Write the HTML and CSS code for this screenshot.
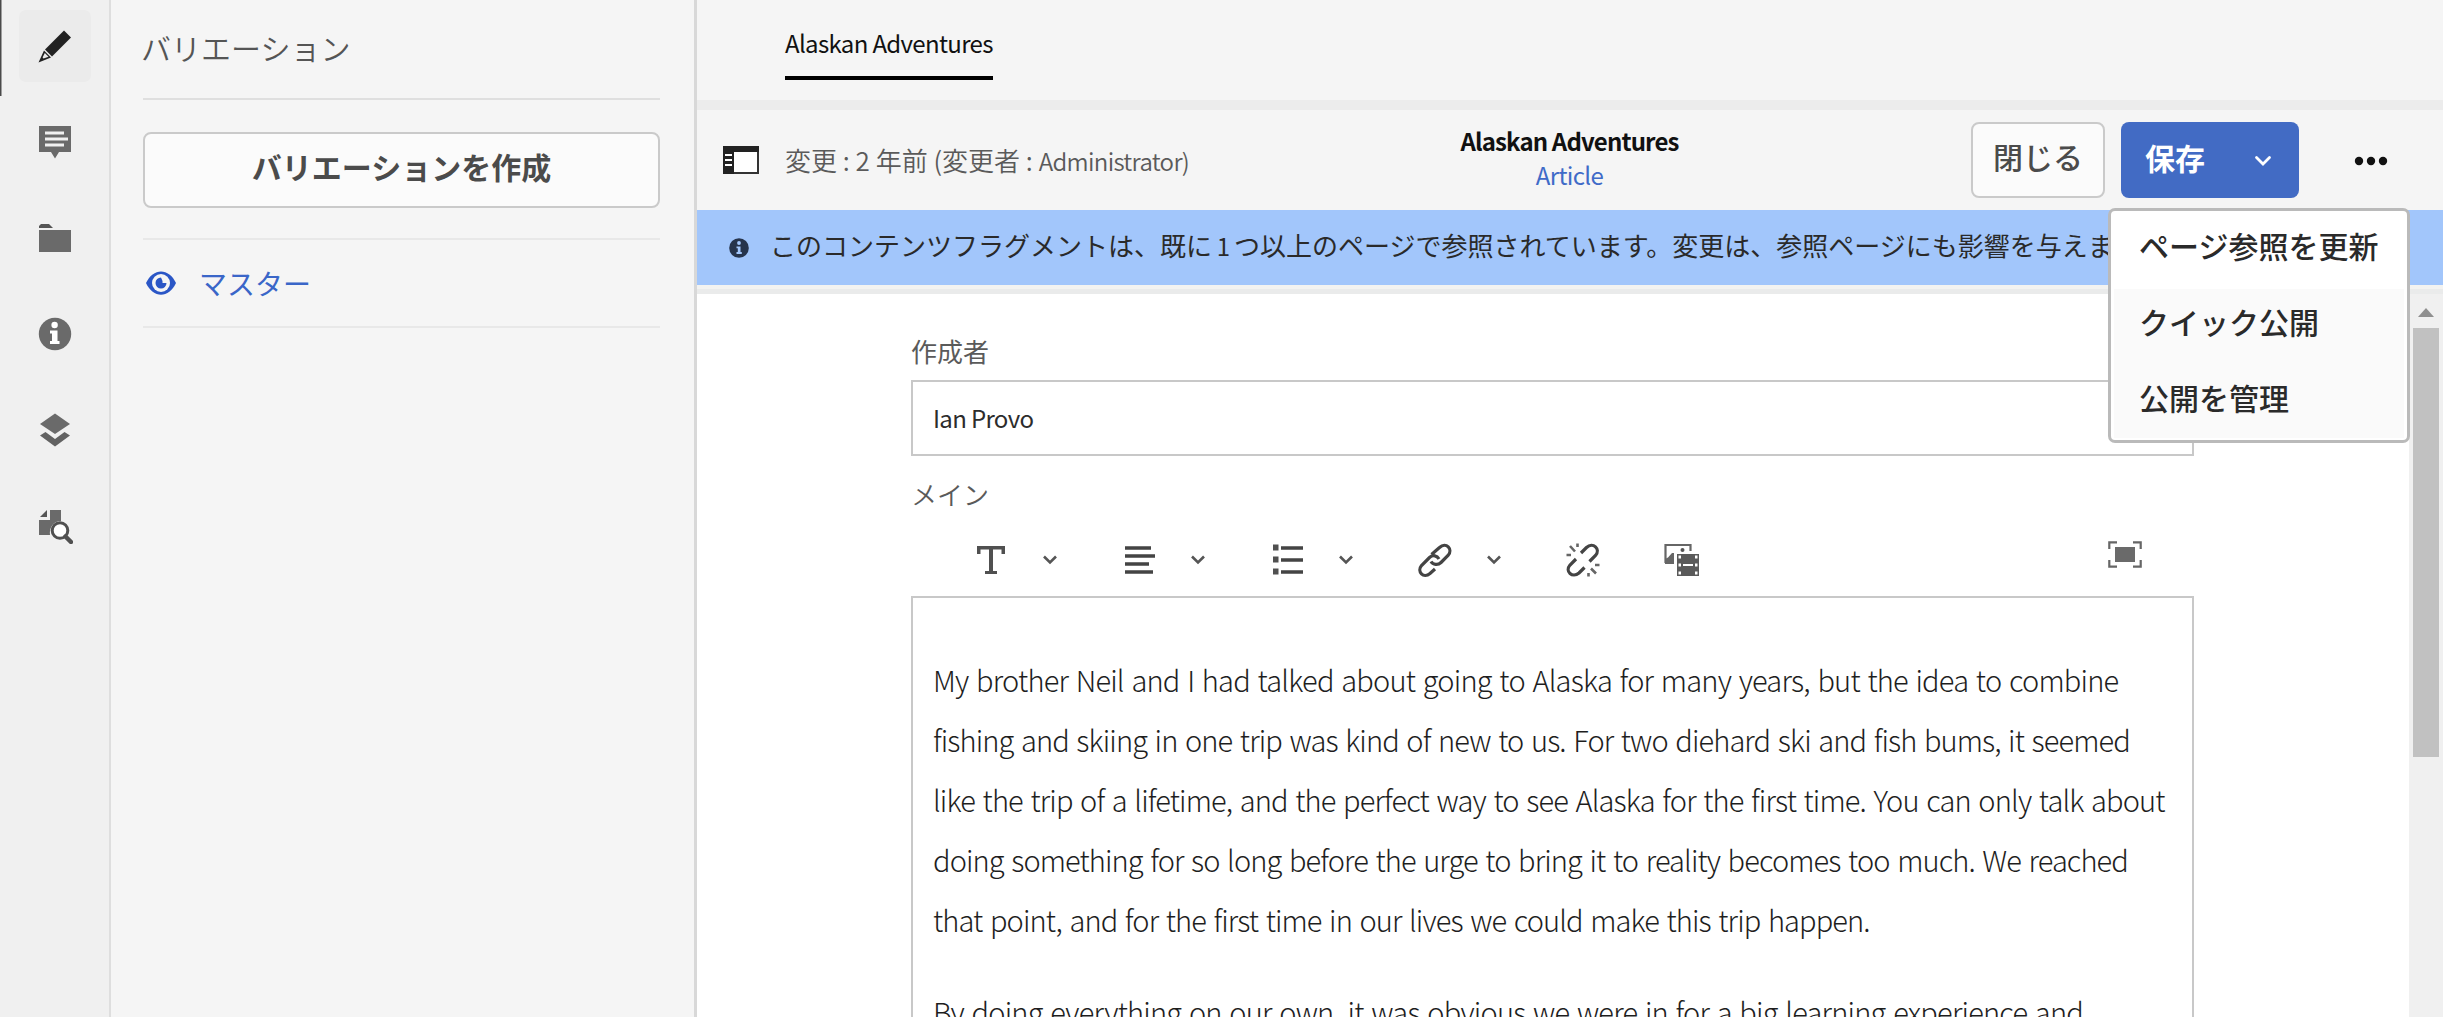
FILE: index.html
```html
<!DOCTYPE html>
<html lang="ja">
<head>
<meta charset="utf-8">
<title>Alaskan Adventures</title>
<link rel="stylesheet" href="styles.css">
</head>
<body>
<nav class="rail">
  <a class="rail-item is-selected"><svg width="36" height="36" viewBox="0 0 36 36"><path d="M27 2.500 34 9.500 15 28.500 8 21.500Z" fill="#222"/><path d="M7 22.500 14 29.500 1.500 34.500Z" fill="#222"/><path d="M7.800 25 11.500 28.700 6.500 30.500 5.600 29.600Z" fill="#ebebeb"/></svg></a>
  <a class="rail-item"><svg width="36" height="36" viewBox="0 0 36 36"><path d="M2 2H34V28H22L18 34.500 14 28H2Z" fill="#6a6a6a"/><path d="M8 9H27M8 15H31M8 21H27" stroke="#f0f0f0" stroke-width="3"/></svg></a>
  <a class="rail-item"><svg width="36" height="36" viewBox="0 0 36 36"><path d="M2 8V6L4 4H12L16 8Z" fill="#555"/><path d="M2 10H34V32H2Z" fill="#6a6a6a"/></svg></a>
  <a class="rail-item"><svg width="36" height="36" viewBox="0 0 36 36"><circle cx="18" cy="18" r="16.200" fill="#6a6a6a"/><circle cx="17.600" cy="9" r="3.200" fill="#fff"/><path d="M13 14.500H20.500V25H22.500V28H13V25H15V17.500H13Z" fill="#fff"/></svg></a>
  <a class="rail-item"><svg width="36" height="36" viewBox="0 0 36 36"><path d="M18 1.500 33 12 18 22 3 12Z" fill="#6a6a6a"/><path d="M8.500 20 18 27 27.500 20 33 23.500 18 34.500 3 23.500Z" fill="#626262"/></svg></a>
  <a class="rail-item"><svg width="36" height="36" viewBox="0 0 36 36"><path d="M10 2V9H3Z" fill="#555"/><path d="M13 2H24V13C17 13 12 19 13 27H2V12H13Z" fill="#6a6a6a"/><circle cx="23" cy="22.500" r="7.800" fill="#fff" stroke="#505050" stroke-width="3"/><path d="M28.500 28.500 34 34" stroke="#505050" stroke-width="4.500" stroke-linecap="round"/></svg></a>
</nav>

<aside class="panel">
  <h2 class="panel-title">バリエーション</h2>
  <div class="panel-action"><button class="btn btn-create">バリエーションを作成</button></div>
  <a class="variation"><svg width="32" height="24" viewBox="0 0 32 24"><path d="M1 12C8-3.500 24-3.500 31 12C24 27.500 8 27.500 1 12Z" fill="#2a56c6"/><circle cx="16" cy="12" r="9" fill="#f5f5f5"/><path d="M16 6.500A5.500 5.500 0 1 0 21.500 12H17.500V10Z" fill="#2a56c6"/></svg><span>マスター</span></a>
</aside>

<main class="main">
  <header class="tabs"><a class="tab latin">Alaskan Adventures</a></header>

  <div class="toolbar">
    <div class="toolbar-left">
      <svg width="36" height="28" viewBox="0 0 36 28"><rect x="1" y="1" width="34" height="26" fill="#fff" stroke="#333" stroke-width="2"/><path d="M0 0H36V6H0Z" fill="#222"/><path d="M0 5H11V28H0Z" fill="#222"/><path d="M2 9H9M2 14H9M2 19H9" stroke="#fff" stroke-width="2"/></svg>
      <span class="modified">変更 : 2 年前 (変更者 : <span class="latin">Administrator)</span></span>
    </div>
    <div class="heading latin"><strong>Alaskan Adventures</strong><a>Article</a></div>
    <div class="toolbar-right">
      <button class="btn btn-close">閉じる</button>
      <div class="save-group">
        <button class="btn btn-save">保存<svg width="18" height="12" viewBox="0 0 18 12"><path d="M2.500 2.500 9 9 15.500 2.500" fill="none" stroke="#fff" stroke-width="2.800" stroke-linecap="round"/></svg></button>
        <ul class="menu">
          <li class="menu-item is-focused">ページ参照を更新</li>
          <li class="menu-item">クイック公開</li>
          <li class="menu-item">公開を管理</li>
        </ul>
      </div>
      <svg class="more" width="36" height="12" viewBox="0 0 36 12"><g fill="#111"><circle cx="6" cy="6" r="4.200"/><circle cx="18" cy="6" r="4.200"/><circle cx="30" cy="6" r="4.200"/></g></svg>
    </div>
  </div>

  <div class="banner">
    <svg width="20" height="20" viewBox="0 0 20 20"><circle cx="10" cy="10" r="9.800" fill="#26344c"/><circle cx="10" cy="5" r="1.900" fill="#a2c6fb"/><path d="M7.500 8.500H11.500V14H12.800V16H7.500V14H8.800V10.300H7.500Z" fill="#a2c6fb"/></svg>
    <span class="banner-text">このコンテンツフラグメントは、既に<span class="latin"> 1 </span>つ以上のページで参照されています。変更は、参照ページにも影響を与えま</span>
  </div>

  <div class="body">
    <form class="form">
      <label class="label">作成者</label>
      <div class="input latin">Ian Provo</div>
      <label class="label label-main">メイン</label>
      <div class="tools">
        <div class="tool"><svg width="36" height="36" viewBox="0 0 36 36"><path d="M4 4H32V12H28.500V7.500H20V29H24V32H12V29H16V7.500H7.500V12H4Z" fill="#505050"/></svg><svg class="chev" width="16" height="10" viewBox="0 0 16 10"><path d="M2 1.500 8 7.500 14 1.500"/></svg></div>
        <div class="tool"><svg width="36" height="36" viewBox="0 0 36 36"><path d="M4 6H30M4 14H34M4 22H28M4 30H32" stroke="#444" stroke-width="3.600"/></svg><svg class="chev" width="16" height="10" viewBox="0 0 16 10"><path d="M2 1.500 8 7.500 14 1.500"/></svg></div>
        <div class="tool"><svg width="36" height="36" viewBox="0 0 36 36"><path d="M12 6H34M12 18H34M12 30H34" stroke="#444" stroke-width="3.600"/><path d="M4 2.500H9.500V8.500H4ZM4 14.500H9.500V20.500H4ZM4 26.500H9.500V32.500H4Z" fill="#505050"/></svg><svg class="chev" width="16" height="10" viewBox="0 0 16 10"><path d="M2 1.500 8 7.500 14 1.500"/></svg></div>
        <div class="tool"><svg width="36" height="36" viewBox="0 0 36 36"><g fill="none" stroke="#444" stroke-width="3.200"><path d="M14.500 12.500 22.500 5.500C29-.5 36.500 7 31 13.500L24 20.500C21 23.500 16 23 14 19.500"/><path d="M18 27 13 31.500C6.500 37-.5 29.500 4.500 23.500L12.500 15.500C16 12.500 20 13.500 22 17"/></g></svg><svg class="chev" width="16" height="10" viewBox="0 0 16 10"><path d="M2 1.500 8 7.500 14 1.500"/></svg></div>
        <div class="tool tool-plain"><svg width="36" height="36" viewBox="0 0 36 36"><g fill="none" stroke="#444" stroke-width="3.200"><path d="M16 11 21.500 5.500C28-.5 36 7 30.500 13.500L24.500 19.500"/><path d="M19.500 25.500 14 31C7.500 36.500-.5 29.500 5 23L11 17"/></g><g stroke="#666" stroke-width="2.600"><path d="M5 4 10 9.500M12.500 1.500V5M1.500 13H6M26 26.500 31 31.500M30 23H34.500M23.500 31V34.500"/></g></svg></div>
        <div class="tool tool-plain"><svg width="36" height="36" viewBox="0 0 36 36"><path d="M2.500 21V3H27.500V9" fill="none" stroke="#666" stroke-width="2.200"/><path d="M2 22V17L5 15.500 9 11H11V22Z" fill="#666"/><circle cx="19.500" cy="8" r="2" fill="#555"/><path d="M14 12H36V34H14Z" fill="#5a5a5a"/><path d="M20 22H30V24H20Z" fill="#fff"/><path d="M15.500 13.500H18V16.500H15.500ZM32 13.500H34.500V16.500H32ZM15.500 21.500H18V24.500H15.500ZM32 21.500H34.500V24.500H32ZM15.500 29.500H18V32.500H15.500ZM32 29.500H34.500V32.500H32Z" fill="#fff"/></svg></div>
        <svg class="fullscreen" width="34" height="28" viewBox="0 0 34 28"><path d="M7 6H27V21H7Z" fill="#6a6a6a"/><path d="M1.300 8V1.300H9M25 1.300H32.700V8M32.700 19V25.700H25M9 25.700H1.300V19" fill="none" stroke="#666" stroke-width="2.200"/></svg>
      </div>
      <div class="editor">
        <p>
          <span class="line">My brother Neil and I had talked about going to Alaska for many years, but the idea to combine</span>
          <span class="line">fishing and skiing in one trip was kind of new to us. For two diehard ski and fish bums, it seemed</span>
          <span class="line">like the trip of a lifetime, and the perfect way to see Alaska for the first time. You can only talk about</span>
          <span class="line">doing something for so long before the urge to bring it to reality becomes too much. We reached</span>
          <span class="line">that point, and for the first time in our lives we could make this trip happen.</span>
        </p>
        <p>
          <span class="line">By doing everything on our own, it was obvious we were in for a big learning experience and</span>
        </p>
      </div>
    </form>
    <div class="scrollbar"><svg width="16" height="9" viewBox="0 0 16 9"><path d="M8 0 16 9H0Z" fill="#8f8f8f"/></svg><div class="thumb"></div></div>
  </div>
</main>
</body>
</html>
```

FILE: styles.css
```css
* { box-sizing: border-box; }

body {
  display: flex;
  width: 2443px;
  height: 1017px;
  margin: 0;
  overflow: hidden;
  background: #fff;
  color: #2c2c2c;
  font: 400 26px/36px "Noto Sans CJK JP", "Noto Sans", sans-serif;
  white-space: nowrap;
}

svg { display: block; flex: none; }

.latin { font-size: 24px; letter-spacing: -0.66px; }

.rail {
  display: flex;
  flex: none;
  flex-direction: column;
  align-items: center;
  gap: 24px;
  width: 111px;
  padding-top: 10px;
  border-right: 2px solid #dedede;
  background: linear-gradient(#4a4a4a, #4a4a4a) 0 0 / 1.500px 96px no-repeat #f0f0f0;
}
.rail-item {
  display: flex;
  align-items: center;
  justify-content: center;
  width: 72px;
  height: 72px;
  border-radius: 7px;
}
.rail-item.is-selected { background: #ebebeb; }

.panel {
  flex: none;
  width: 586px;
  padding: 0 34px 0 32px;
  border-right: 3px solid #d8d8d8;
  background: #f5f5f5;
}
.panel-title {
  height: 100px;
  margin: 0;
  border-bottom: 2px solid #dfdfdf;
  color: #555;
  font-size: 30px;
  font-weight: 350;
  line-height: 94px;
  text-indent: -2px;
}
.panel-action {
  height: 140px;
  padding-top: 32px;
  border-bottom: 2px solid #e8e8e8;
}
.variation {
  display: flex;
  align-items: center;
  gap: 22px;
  height: 88px;
  padding-left: 2px;
  border-bottom: 2px solid #e8e8e8;
  color: #3a66c8;
  font-size: 28px;
}

.btn {
  height: 76px;
  padding: 0 0 8px;
  border: 2px solid #cacaca;
  border-radius: 8px;
  background: #fbfbfb;
  color: #4b4b4b;
  font: 700 30px/64px "Noto Sans CJK JP", sans-serif;
}
.btn-create { width: 100%; }
.btn-close { width: 134px; font-weight: 500; }
.btn-save {
  display: flex;
  align-items: center;
  justify-content: space-between;
  width: 178px;
  padding: 0 27px 6px 24px;
  border: 0;
  background: #426bc4;
  color: #fff;
}
.btn-save svg { margin-top: 7px; }

.main {
  display: flex;
  flex: 1;
  flex-direction: column;
  min-width: 0;
}
.tabs {
  height: 110px;
  padding-left: 88px;
  border-bottom: 10px solid #ececec;
  background: #f5f5f5;
}
.tab {
  display: inline-block;
  height: 80px;
  border-bottom: 4px solid #000;
  color: #111;
  line-height: 85px;
}
.toolbar {
  display: grid;
  grid-template-columns: 1fr auto 1fr;
  align-items: start;
  height: 100px;
  padding: 12px 54px 0 26px;
  background: #f5f5f5;
}
.toolbar-left, .toolbar-right {
  display: flex;
  align-items: center;
  height: 76px;
}
.toolbar-left { gap: 26px; }
.toolbar-right { justify-content: flex-end; }
.modified { color: #5a5a5a; font-weight: 350; }
.heading {
  display: flex;
  flex-direction: column;
  align-items: center;
  margin-left: 27px;
  padding-top: 2px;
  color: #111;
  line-height: 34px;
}
.heading strong { letter-spacing: -0.85px; }
.heading a { color: #3f6bc8; }
.save-group { position: relative; margin: 0 54px 0 16px; }
.more { margin-top: 2px; }

.menu {
  position: absolute;
  z-index: 2;
  top: 86px;
  left: -13px;
  width: 302px;
  height: 235px;
  margin: 0;
  padding: 2px 3px;
  border: 3px solid #bababa;
  border-radius: 7px;
  background: #fff;
  color: #2a2a2a;
  font-size: 30px;
  font-weight: 500;
  list-style: none;
}
.menu-item { height: 76px; padding-left: 25px; background: #fafafa; line-height: 64px; }
.menu-item.is-focused { background: #fff; }
.menu-item:last-child { height: 73px; }

.banner {
  display: flex;
  align-items: center;
  gap: 21px;
  height: 84px;
  padding: 0 0 9px 32px;
  background: linear-gradient(#a2c6fb 75px, #f3f3f1 75px, #f3f3f1 79px, #eaebeb 79px);
  color: #2a2a2a;
}
.banner-text { padding-bottom: 4px; }

.body { display: flex; flex: 1; min-height: 0; }
.form {
  display: flex;
  flex: 1;
  flex-direction: column;
  min-width: 0;
  padding: 39px 215px 0 214px;
}
.label { display: block; flex: none; height: 47px; color: #5a5a5a; }
.label-main { height: 48px; margin-top: 20px; font-weight: 350; }
.input {
  flex: none;
  height: 76px;
  padding-left: 20px;
  border: 2px solid #c8c8c8;
  line-height: 72px;
}
.tools {
  display: flex;
  flex: none;
  align-items: center;
  height: 72px;
  padding: 0 52px 0 62px;
}
.tool { display: flex; align-items: center; gap: 33px; width: 148px; }
.tool-plain { width: 98px; }
.chev { fill: none; stroke: #555; stroke-width: 2.600px; }
.fullscreen { margin: 0 0 10px auto; }
.editor {
  flex: 1;
  min-height: 0;
  padding: 51px 20px 0;
  border: 2px solid #c8c8c8;
  border-bottom: 0;
  overflow: hidden;
  color: #1e1e1e;
  font-size: 29px;
  font-weight: 300;
  letter-spacing: -0.89px;
  line-height: 60px;
  word-spacing: 2px;
}
.editor p { margin: 0 0 32px; }
.line { display: block; }
.line:first-child { letter-spacing: -0.8px; }
.line:nth-child(3) { letter-spacing: -0.86px; }

.scrollbar {
  display: flex;
  flex: none;
  flex-direction: column;
  align-items: center;
  gap: 11px;
  width: 34px;
  padding-top: 14px;
  background: #f0f0f0;
}
.thumb { width: 26px; height: 429px; background: #c1c1c1; }
```
